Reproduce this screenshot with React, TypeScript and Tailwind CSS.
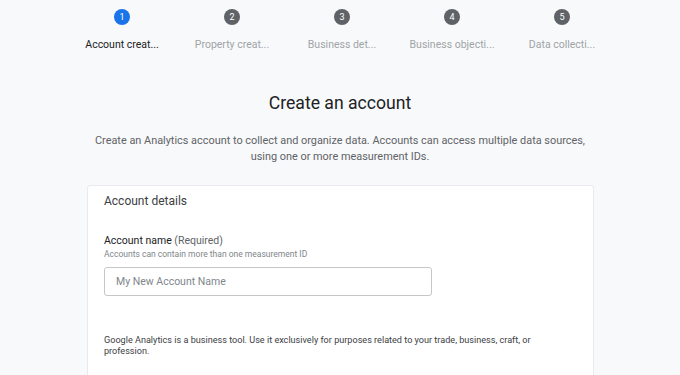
const steps = [
  { n: 1, label: 'Account creat...', active: true },
  { n: 2, label: 'Property creat...', active: false },
  { n: 3, label: 'Business det...', active: false },
  { n: 4, label: 'Business objecti...', active: false },
  { n: 5, label: 'Data collecti...', active: false },
];

export default function App() {
  return (
    <div className="w-[680px] h-[375px] overflow-hidden bg-[#f8f9fa] font-['Roboto',sans-serif] text-[#202124]">
      {/* Stepper */}
      <div className="flex pl-[67px] pt-[9px]">
        {steps.map((s) => (
          <div key={s.n} className="w-[110px] flex flex-col items-center">
            <div
              className={
                s.active
                  ? 'w-[16px] h-[16px] rounded-full bg-[#1a73e8] text-white text-[9px] leading-[16px] text-center'
                  : 'w-[16px] h-[16px] rounded-full bg-[#5f6368] text-white text-[9px] leading-[16px] text-center'
              }
            >
              {s.n}
            </div>
            <div
              className={
                s.active
                  ? 'mt-[13px] text-[10.5px] leading-[14px] text-[#202124] whitespace-nowrap'
                  : 'mt-[13px] text-[10.5px] leading-[14px] text-[#a0a4a8] whitespace-nowrap'
              }
            >
              {s.label}
            </div>
          </div>
        ))}
      </div>

      {/* Heading */}
      <h1 className="mt-[40px] text-center text-[17.6px] leading-[22px] text-[#202124]">Create an account</h1>
      <p className="mx-auto mt-[19px] w-[510px] text-center text-[10.9px] leading-[16px] text-[#5f6368]">
        Create an Analytics account to collect and organize data. Accounts can access multiple data sources, using one or more measurement IDs.
      </p>

      {/* Card */}
      <div className="ml-[87px] mt-[20px] w-[507px] h-[200px] bg-white border border-[#e8eaed] rounded-t-[3px] px-[16px]">
        <div className="pt-[7px] text-[12px] leading-[16px] text-[#3c4043]">Account details</div>
        <div className="mt-[25px] text-[10.5px] leading-[14px] text-[#202124]">
          Account name <span className="text-[#5f6368]">(Required)</span>
        </div>
        <div className="mt-[1px] text-[8.5px] leading-[11px] text-[#80868b]">Accounts can contain more than one measurement ID</div>
        <div className="mt-[7px] w-[328px] h-[29px] border border-[#c4c7c5] rounded-[3px] px-[11px] flex items-center text-[10.5px] text-[#80868b]">
          My New Account Name
        </div>
        <p className="mt-[39px] w-[460px] text-[9.1px] leading-[11px] text-[#3c4043]">
          Google Analytics is a business tool. Use it exclusively for purposes related to your trade, business, craft, or profession.
        </p>
      </div>
    </div>
  );
}
